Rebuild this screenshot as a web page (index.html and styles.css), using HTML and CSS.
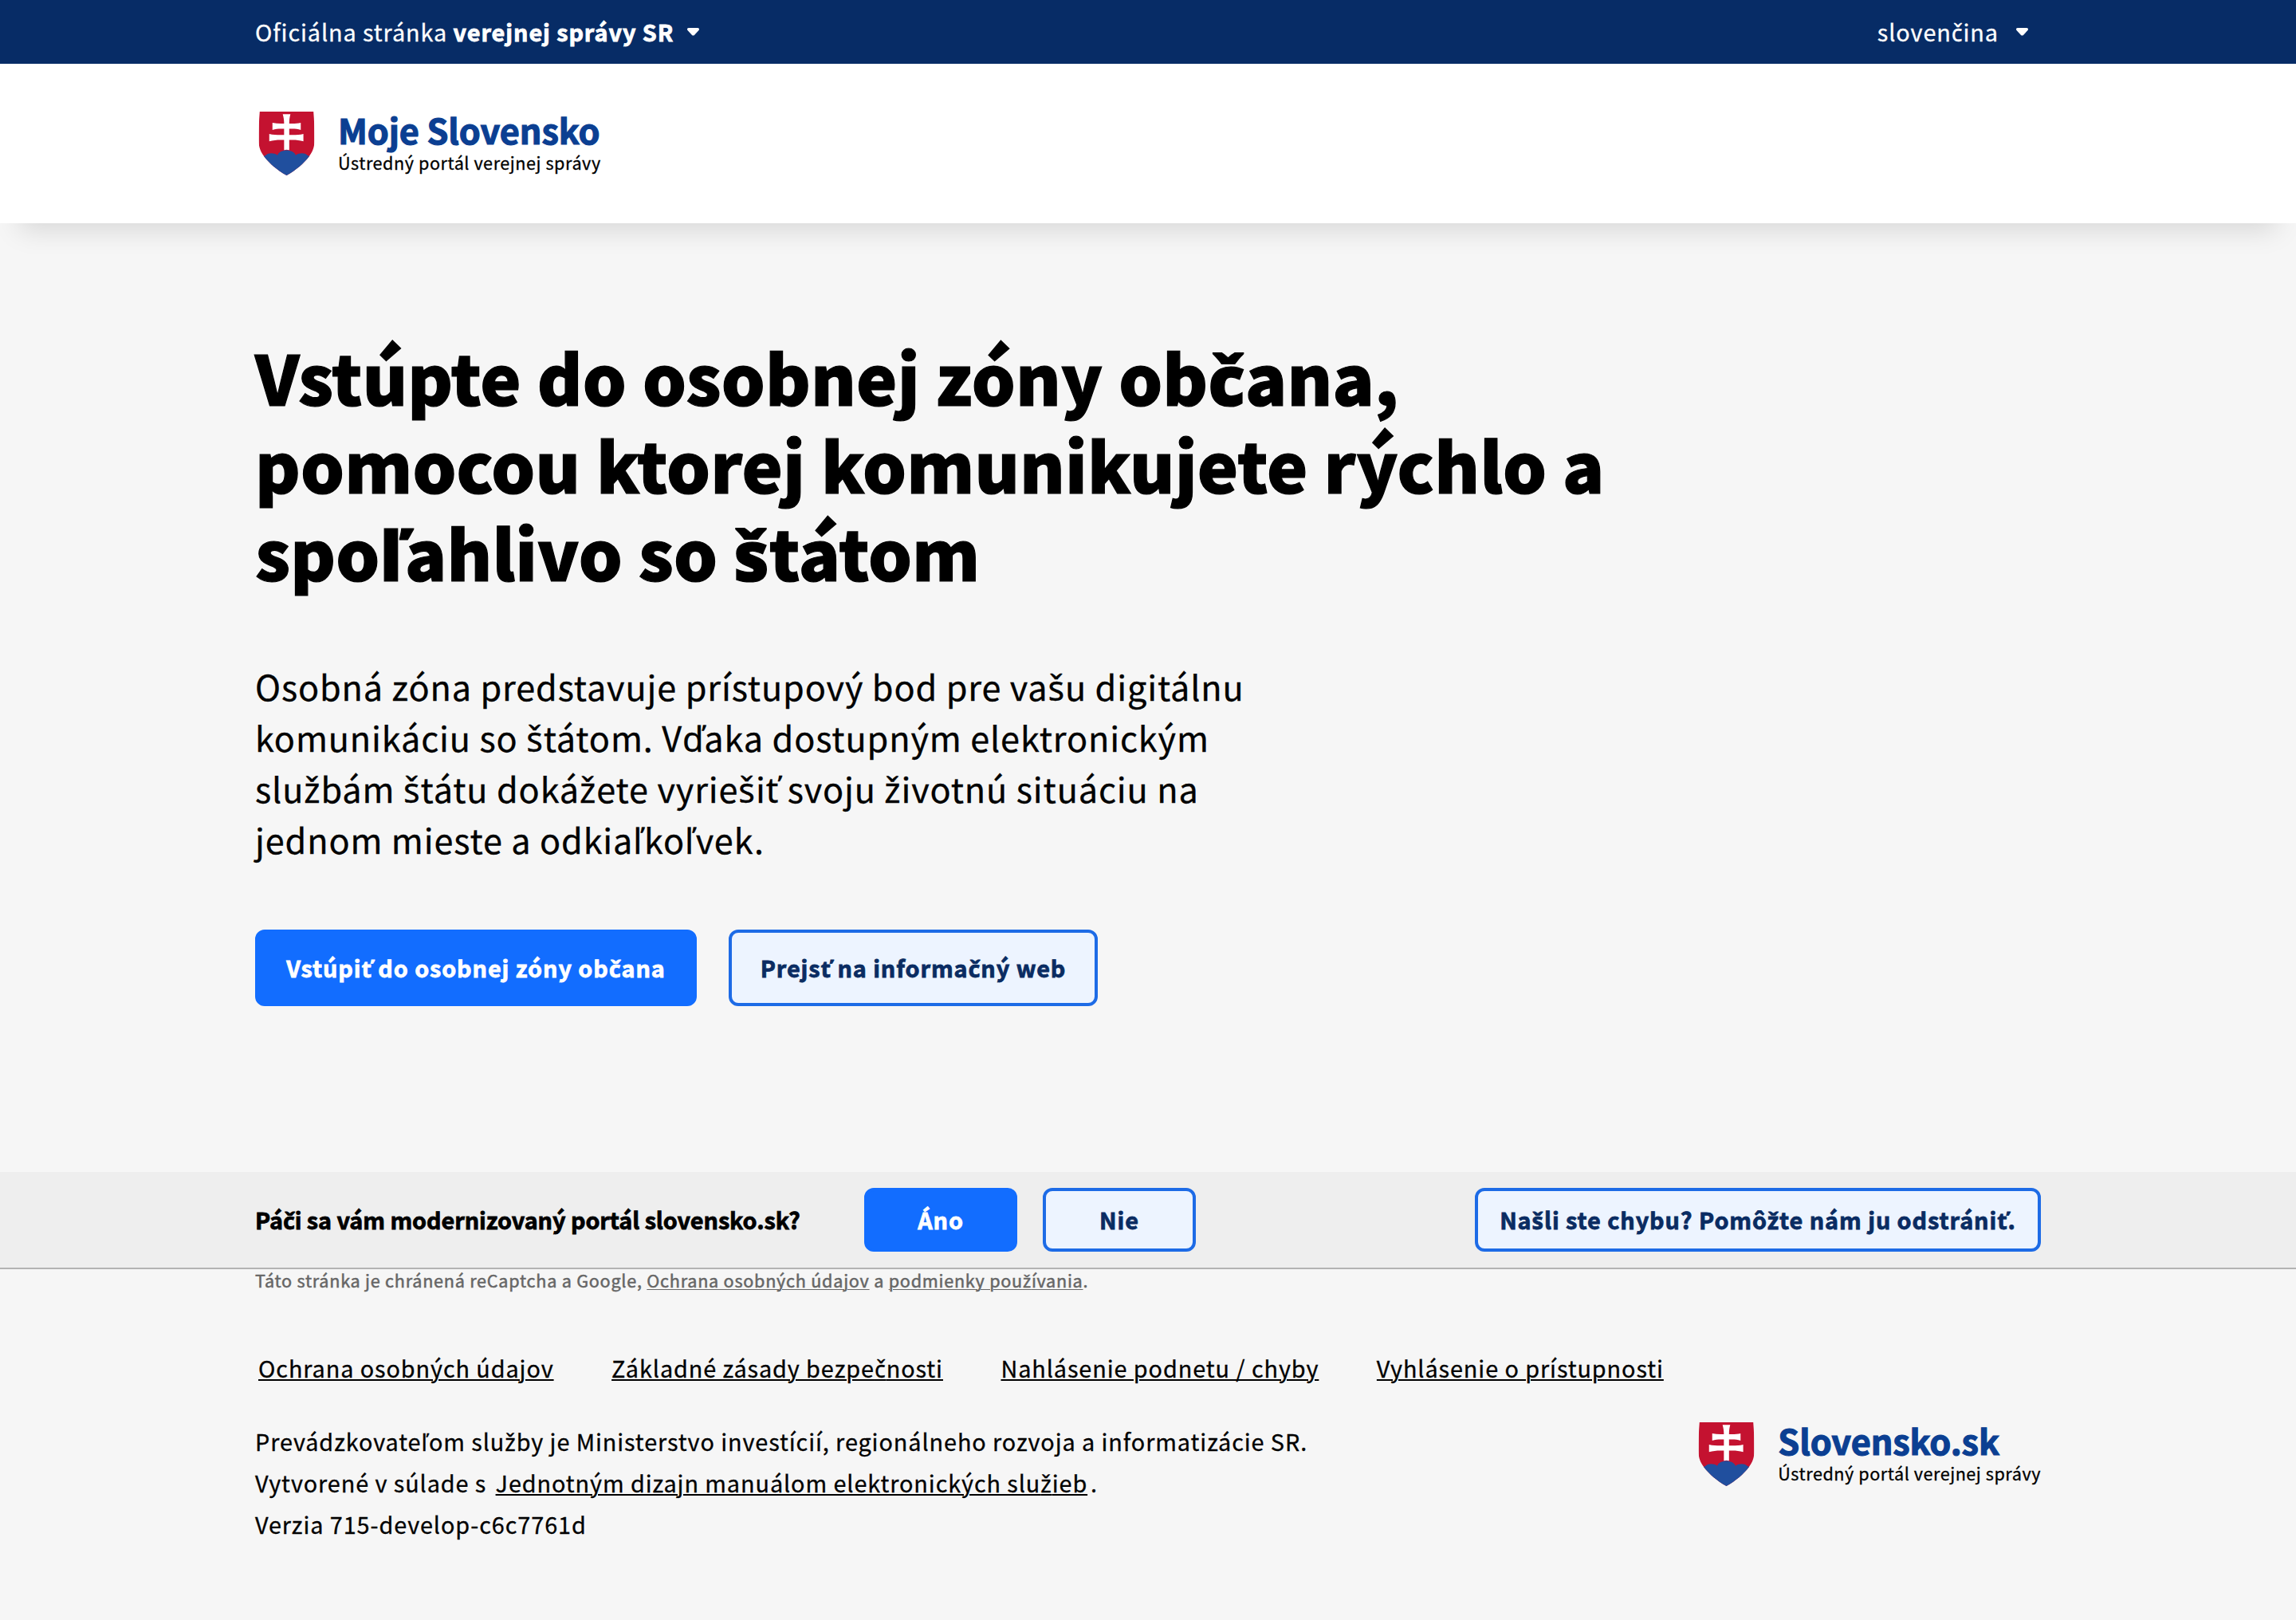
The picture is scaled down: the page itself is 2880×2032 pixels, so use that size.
FILE: index.html
```html
<!DOCTYPE html>
<html lang="sk">
<head>
<meta charset="utf-8">
<title>Moje Slovensko</title>
<link rel="stylesheet" href="styles.css">
</head>
<body>
<svg class="defs" width="0" height="0" aria-hidden="true">
  <symbol id="shield" viewBox="0 0 211 241">
    <clipPath id="shape"><path d="M4 0H207C210 35 211 70 211 108C211 134 204 152 190 170C170 196 142 220 105.500 241C69 220 41 196 21 170C7 152 0 134 0 108C0 70 1 35 4 0Z"/></clipPath>
    <g clip-path="url(#shape)">
      <path fill="#c41230" d="M0 0H211V241H0Z"/>
      <path fill="#204f9e" d="M0 182C14 172 20 168 28 164C36 156 58 155 71 165C79 140 131 140 140 165C153 155 175 156 183 164C191 168 197 172 211 182V241H0Z"/>
      <path fill="#fff" d="M91 10H120C117 21 115.500 31 115.500 45C131 46 146 45 159 42V69C146 65 131 64 115.500 65V88C135 89 152 88 169 84V112C152 107 135 106 115.500 107V145C109 143 102 143 96 145V107C76 106 58 107 40 112V84C58 88 76 89 96 88V65C80 64 66 65 52 69V42C66 45 80 46 96 45C96 31 94 21 91 10Z"/>
    </g>
  </symbol>
  <symbol id="caret" viewBox="0 0 15 10">
    <path fill="#fff" d="M1.800 0H13.200C15 0 15.600 2 14.300 3.300L9 8.900C8.200 9.800 6.800 9.800 6 8.900L.7 3.300C-.6 2 0 0 1.800 0Z"/>
  </symbol>
</svg>

<div class="topbar">
  <div class="container topbar-row">
    <div class="official"><span>Oficiálna stránka <strong>verejnej správy SR</strong></span><svg class="caret"><use href="#caret"/></svg></div>
    <div class="language"><span>sloven<i>č</i>ina</span><svg class="caret"><use href="#caret"/></svg></div>
  </div>
</div>

<header class="header">
  <div class="container">
    <a class="logo">
      <svg class="shield"><use href="#shield"/></svg>
      <span class="logo-text"><span class="logo-title">Moje Slovensko</span><span class="logo-sub">Ústredný portál verejnej správy</span></span>
    </a>
  </div>
</header>

<main class="container main">
  <h1>Vstúpte do osobnej zóny ob<i>č</i>ana,<br>pomocou ktorej komunikujete rýchlo a<br>spo<i class="wide">ľ</i>ahlivo so <i>š</i>tátom</h1>
  <p class="lead">Osobná zóna predstavuje prístupový bod pre va<i>š</i>u digitálnu<br>komunikáciu so <i>š</i>tátom. V<i>ď</i>aka dostupným elektronickým<br>slu<i>ž</i>bám <i>š</i>tátu doká<i>ž</i>ete vyrie<i>š</i>i<i>ť</i> svoju <i>ž</i>ivotnú situáciu na<br>jednom mieste a odkia<i class="wide">ľ</i>ko<i class="wide">ľ</i>vek.</p>
  <div class="actions">
    <a class="btn primary enter"><span>Vstúpi<i>ť</i> do osobnej zóny ob<i>č</i>ana</span></a>
    <a class="btn info"><span>Prejs<i>ť</i> na informa<i>č</i>ný web</span></a>
  </div>
</main>

<section class="feedback">
  <div class="container feedback-row">
    <p class="question">Pá<i>č</i>i sa vám modernizovaný portál slovensko.sk?</p>
    <a class="btn small primary"><span>Áno</span></a>
    <a class="btn small"><span>Nie</span></a>
    <a class="btn small report"><span>Na<i>š</i>li ste chybu? Pomô<i>ž</i>te nám ju odstráni<i>ť</i>.</span></a>
  </div>
</section>

<footer class="container footer">
  <p class="captcha">Táto stránka je chránená reCaptcha a Google, <a>Ochrana osobných údajov</a> a <a>podmienky pou<i>ž</i>ívania</a>.</p>
  <nav class="links">
    <a>Ochrana osobných údajov</a>
    <a>Základné zásady bezpe<i>č</i>nosti</a>
    <a>Nahlásenie podnetu / chyby</a>
    <a>Vyhlásenie o prístupnosti</a>
  </nav>
  <div class="meta">
    <p class="about">Prevádzkovate<i class="wide">ľ</i>om slu<i>ž</i>by je Ministerstvo investícií, regionálneho rozvoja a informatizácie SR.<br>Vytvorené v súlade s <a>Jednotným dizajn manuálom elektronických slu<i>ž</i>ieb</a>.<br>Verzia 715-develop-c6c7761d</p>
    <a class="logo">
      <svg class="shield"><use href="#shield"/></svg>
      <span class="logo-text"><span class="logo-title">Slovensko.sk</span><span class="logo-sub">Ústredný portál verejnej správy</span></span>
    </a>
  </div>
</footer>
</body>
</html>
```
FILE: styles.css
```css
* { box-sizing: border-box; }

body {
  margin: 0;
  min-height: 2032px;
  background: #f6f6f6;
  color: #000;
  font: 28.8px/52px "Noto Sans CJK SC", "Noto Sans", sans-serif;
  letter-spacing: 0.92px;
  -webkit-text-stroke: 0.3px currentColor;
}

h1, p { margin: 0; }

/* letters with a caron, which the main family lacks */
i {
  font-family: "Noto Sans", sans-serif;
  font-style: normal;
  line-height: 0;
}

i.wide { margin-right: 0.04em; }

strong { -webkit-text-stroke-width: 0.8px; }

.defs { position: absolute; }

.container {
  width: 2240px;
  margin: 0 auto;
}

.topbar {
  background: #072c66;
  color: #fff;
}

.topbar-row {
  display: flex;
  justify-content: space-between;
  align-items: center;
  height: 80px;
}

.official, .language {
  display: flex;
  align-items: center;
  gap: 17px;
}

.language {
  gap: 22px;
  padding-right: 16px;
}

.caret {
  width: 15px;
  height: 10px;
}

.header {
  display: flex;
  align-items: center;
  height: 200px;
  background: #fff;
  box-shadow: 0 32px 32px -24px rgba(0, 0, 0, 0.13);
}

.logo {
  display: flex;
  align-items: center;
  gap: 29px;
}

.header .logo { padding-left: 4px; }

.header .logo-text { padding-bottom: 1px; }

.shield {
  width: 71px;
  height: 80px;
}

.logo-text {
  display: flex;
  flex-direction: column;
}

.logo-title {
  color: #0b3f92;
  font-size: 43.2px;
  font-weight: 700;
  line-height: 48px;
  letter-spacing: -0.1px;
  -webkit-text-stroke-width: 1.2px;
}

.logo-sub {
  color: #000;
  font-size: 21.6px;
  line-height: 35px;
  letter-spacing: 0.55px;
  white-space: nowrap;
}

.main { padding: 137px 0 208px; }

h1 {
  font-size: 86.4px;
  font-weight: 900;
  line-height: 110px;
  letter-spacing: 0.15px;
  -webkit-text-stroke-width: 1.2px;
}

.lead {
  margin-top: 81px;
  font-size: 43.2px;
  line-height: 64px;
  letter-spacing: 0.87px;
}

.actions {
  display: flex;
  gap: 40px;
  margin-top: 82px;
}

.btn {
  display: flex;
  justify-content: center;
  align-items: center;
  height: 96px;
  border: 4px solid #1d6be6;
  border-radius: 12px;
  background: #edf4ff;
  color: #0a2c62;
  font-weight: 700;
  white-space: nowrap;
  -webkit-text-stroke-width: 0.8px;
}

.primary {
  border-color: #126dff;
  background: #126dff;
  color: #fff;
}

.enter { width: 554px; }
.info { width: 463px; }

.feedback {
  border-bottom: 2px solid #b3b3b3;
  background: #eee;
}

.feedback-row {
  display: flex;
  align-items: center;
  gap: 32px;
  height: 120px;
}

.question {
  width: 732px;
  font-weight: 700;
  letter-spacing: -0.07px;
  -webkit-text-stroke-width: 0.8px;
}

.small {
  width: 192px;
  height: 80px;
}

.report {
  width: 710px;
  margin-left: auto;
}

.captcha {
  color: #666;
  font-size: 21.6px;
  line-height: 28px;
  letter-spacing: 0.75px;
  -webkit-text-stroke-width: 0.5px;
}

.captcha a {
  text-decoration: underline 1px;
  text-underline-offset: 2px;
}

.links {
  display: flex;
  gap: 72.5px;
  margin-top: 70px;
  padding-left: 4px;
}

.links a, .about a {
  text-decoration: underline 2px;
  text-underline-offset: 2px;
}

.meta {
  display: flex;
  justify-content: space-between;
  align-items: flex-start;
  margin-top: 40px;
}

.about a { margin: 0 4px; }
```
